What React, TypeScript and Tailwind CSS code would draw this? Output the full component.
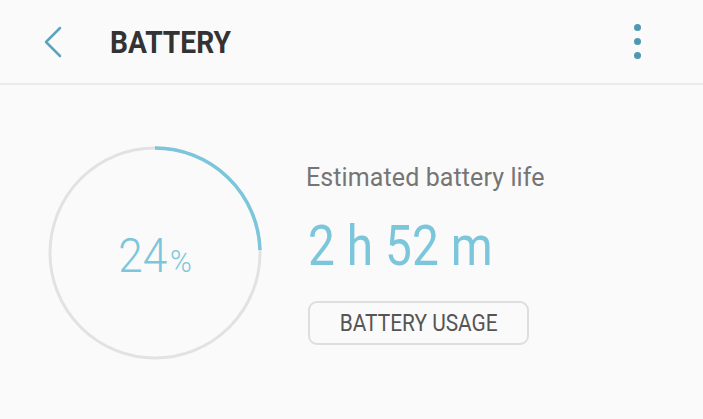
import React from "react";

export default function App() {
  const r = 105;
  const c = 2 * Math.PI * r;
  return (
    <div className="w-[703px] h-[419px] bg-[#fafafa] overflow-hidden" style={{ fontFamily: "Roboto, 'Noto Sans', sans-serif" }}>
      <header className="h-[85px] flex items-center border-b-2 border-[#ebebeb]">
        <div className="w-[110px] flex items-center pl-[42px]">
          <svg width="22" height="32" viewBox="0 0 22 32" fill="none">
            <path d="M18 2 L4 16 L18 30" stroke="#5aa5bd" strokeWidth="2.5" strokeLinecap="round" strokeLinejoin="round" />
          </svg>
        </div>
        <h1 className="text-[32px] font-bold text-[#333333] leading-none mt-[1px] scale-x-[0.88] origin-left whitespace-nowrap">BATTERY</h1>
        <div className="ml-auto mr-[62px] flex flex-col gap-[7px]">
          <span className="w-[7px] h-[7px] rounded-full bg-[#4f98b0]" />
          <span className="w-[7px] h-[7px] rounded-full bg-[#4f98b0]" />
          <span className="w-[7px] h-[7px] rounded-full bg-[#4f98b0]" />
        </div>
      </header>
      <main className="flex items-start pt-[60px] pl-[47px]">
        <div className="relative w-[216px] h-[216px]">
          <svg width="216" height="216" viewBox="0 0 216 216">
            <circle cx="108" cy="108" r={r} fill="none" stroke="#e2e2e2" strokeWidth="3" />
            <circle
              cx="108"
              cy="108"
              r={r}
              fill="none"
              stroke="#7cc6dc"
              strokeWidth="3.5"
              strokeDasharray={`${c * 0.245} ${c}`}
              transform="rotate(-90 108 108)"
            />
          </svg>
          <div className="absolute inset-0 flex items-baseline justify-center pt-[6px]">
            <div className="flex items-baseline self-center scale-x-[0.92]">
              <span className="text-[48px] font-light text-[#7cc6dc] leading-none">24</span>
              <span className="text-[32px] font-light text-[#7cc6dc] leading-none ml-[3px]">%</span>
            </div>
          </div>
        </div>
        <div className="ml-[43px] mt-[19px] flex flex-col items-start">
          <div className="text-[25px] leading-[28px] text-[#757575] tracking-[0.1px] whitespace-nowrap">Estimated battery life</div>
          <div className="text-[55px] leading-[60px] text-[#7cc6dc] mt-[24px] ml-[2px] scale-x-[0.87] origin-left whitespace-nowrap">2 h 52 m</div>
          <button className="mt-[25px] ml-[2px] w-[221px] h-[44px] border-2 border-[#dedede] rounded-[9px] flex items-center justify-center text-[#555555]">
            <span className="text-[24px] leading-none scale-x-[0.87] whitespace-nowrap">BATTERY USAGE</span>
          </button>
        </div>
      </main>
    </div>
  );
}
